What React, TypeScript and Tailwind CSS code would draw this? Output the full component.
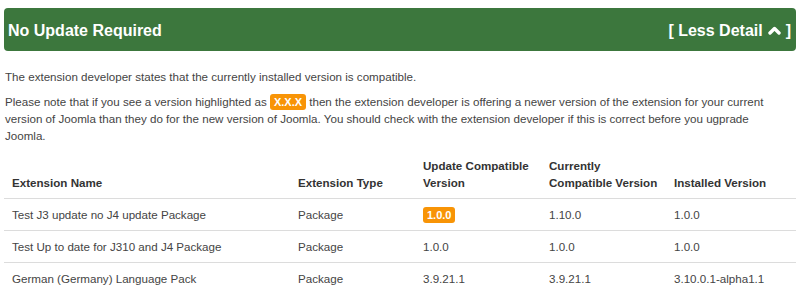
const rows = [
  { name: "Test J3 update no J4 update Package", type: "Package", update: "1.0.0", highlight: true, current: "1.10.0", installed: "1.0.0" },
  { name: "Test Up to date for J310 and J4 Package", type: "Package", update: "1.0.0", highlight: false, current: "1.0.0", installed: "1.0.0" },
  { name: "German (Germany) Language Pack", type: "Package", update: "3.9.21.1", highlight: false, current: "3.9.21.1", installed: "3.10.0.1-alpha1.1" },
];

function Badge({ children }: { children: React.ReactNode }) {
  return (
    <span className="inline-block rounded-[3px] bg-[#f89406] px-[4px] py-[1px] text-[11px] font-bold leading-[14px] text-white">
      {children}
    </span>
  );
}

export default function App() {
  return (
    <div className="min-h-screen bg-white px-[4px] pt-[8px] font-['Liberation_Sans',Arial,sans-serif] text-[11.6px] leading-[17px] text-[#444]">
      {/* Status bar */}
      <div className="flex h-[43px] items-center justify-between rounded-[4px] bg-[#3c773d] pl-[4px] pr-[5px] text-white">
        <h2 className="mt-[1px] text-[16px] font-bold">No Update Required</h2>
        <button className="mt-[1px] flex items-center gap-[5px] text-[16px] font-bold">
          <span>[ Less Detail</span>
          <svg width="13" height="10" viewBox="0 0 13 10" className="mt-[-1px]">
            <polyline points="2,8 6.5,3.5 11,8" fill="none" stroke="white" strokeWidth="3.4" strokeLinejoin="round" strokeLinecap="round" />
          </svg>
          <span>]</span>
        </button>
      </div>

      <div className="pl-[1px] pr-[14px] pt-[17px]">
        <p className="mb-[8px]">The extension developer states that the currently installed version is compatible.</p>
        <p className="mb-[6px]">
          Please note that if you see a version highlighted as <Badge>X.X.X</Badge> then the extension developer is offering a newer
          version of the extension for your current version of Joomla than they do for the new version of Joomla. You should check with
          the extension developer if this is correct before you ugprade Joomla.
        </p>
      </div>

      <table className="w-full table-fixed border-collapse text-left">
        <thead>
          <tr className="border-b border-[#dcdcdc] align-bottom font-bold text-[#333]">
            <th className="w-[286px] whitespace-nowrap px-[8px] py-[7px]">Extension Name</th>
            <th className="w-[125px] whitespace-nowrap px-[8px] py-[7px]">Extension Type</th>
            <th className="w-[126px] whitespace-nowrap px-[8px] py-[7px]">
              Update Compatible
              <br />
              Version
            </th>
            <th className="w-[125px] whitespace-nowrap px-[8px] py-[7px]">
              Currently
              <br />
              Compatible Version
            </th>
            <th className="whitespace-nowrap px-[8px] py-[7px]">Installed Version</th>
          </tr>
        </thead>
        <tbody>
          {rows.map((r) => (
            <tr key={r.name} className="border-b border-[#dcdcdc] last:border-b-0">
              <td className="px-[8px] py-[7px]">{r.name}</td>
              <td className="px-[8px] py-[7px]">{r.type}</td>
              <td className="px-[8px] py-[7px]">{r.highlight ? <Badge>{r.update}</Badge> : r.update}</td>
              <td className="px-[8px] py-[7px]">{r.current}</td>
              <td className="px-[8px] py-[7px]">{r.installed}</td>
            </tr>
          ))}
        </tbody>
      </table>
    </div>
  );
}
